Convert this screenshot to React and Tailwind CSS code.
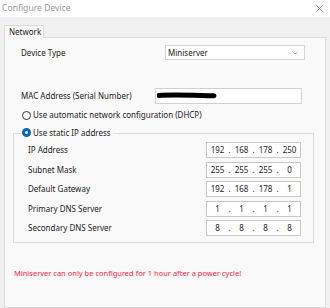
import React from "react";

function IpInput({ parts }) {
  return (
    <div className="w-[95px] h-[16px] bg-white border border-[#c8c8c8] flex items-center text-[8px] text-[#222]">
      {parts.map((p, i) => (
        <React.Fragment key={i}>
          <span className="flex-1 text-center">{p}</span>
          {i < 3 && <span className="w-[3px] text-center">.</span>}
        </React.Fragment>
      ))}
    </div>
  );
}

function Row({ label, parts }) {
  return (
    <div className="flex items-center justify-between h-[16px]">
      <span className="text-[8px] text-[#222]">{label}</span>
      <IpInput parts={parts} />
    </div>
  );
}

export default function App() {
  return (
    <div
      className="w-[330px] h-[308px] bg-[#f0f0f0] overflow-hidden flex flex-col"
      style={{ fontFamily: '"Noto Sans", "Open Sans", sans-serif' }}
    >
      <div className="h-[17px] bg-white flex items-center justify-between pl-[2px] pr-[7px] shrink-0">
        <span className="text-[8.6px] text-[#9a9a9a] leading-none">Configure Device</span>
        <svg width="7" height="7" viewBox="0 0 7 7">
          <path d="M0.5 0.5L6.5 6.5M6.5 0.5L0.5 6.5" stroke="#8a8a8a" strokeWidth="0.8" />
        </svg>
      </div>
      <div className="pl-[4px] pr-[4px] pt-[8px] flex flex-col flex-1">
        <div className="flex">
          <div className="h-[13px] w-[40px] bg-[#f9f9f9] border border-b-0 border-[#d9d9d9] flex items-center pl-[4px] text-[8px] text-[#222] leading-none -mb-px relative">
            Network
          </div>
        </div>
        <div className="flex-1 bg-[#f9f9f9] border border-[#dcdcdc] pl-[16px] pr-[23px] pt-[7px]">
          <div className="flex items-center justify-between h-[15px]">
            <span className="text-[8px] text-[#222]">Device Type</span>
            <div className="w-[140px] h-[15px] bg-white border border-[#d4d4d4] flex items-center justify-between pl-[2px] pr-[6px] mr-[-3px]">
              <span className="text-[8px] text-[#222]">Miniserver</span>
              <svg width="6" height="4" viewBox="0 0 6 4">
                <path d="M0.5 0.5L3 3L5.5 0.5" stroke="#9a9a9a" strokeWidth="0.8" fill="none" />
              </svg>
            </div>
          </div>
          <div className="flex items-center justify-between h-[16px] mt-[28px]">
            <span className="text-[8px] text-[#222]">MAC Address (Serial Number)</span>
            <div className="w-[147px] h-[16px] bg-white border border-[#d0d0d0] flex items-center pl-[1px]">
              <svg width="60" height="8" viewBox="0 0 60 8">
                <path d="M2 3.5 C 15 2.5, 40 3.5, 57 3.8" stroke="#000" strokeWidth="5" strokeLinecap="round" fill="none" />
              </svg>
            </div>
          </div>
          <div className="flex items-center h-[12px] mt-[5px] ml-[1px] gap-[2px]">
            <span className="w-[9px] h-[9px] rounded-full border border-[#333] bg-white" />
            <span className="text-[8px] text-[#222]">Use automatic network configuration (DHCP)</span>
          </div>
          <div className="relative mt-[12px] ml-[-8px] mr-[-12px] border border-[#dcdcdc] h-[110px] pt-[8px] pl-[14px] pr-[12px]">
            <div className="absolute left-[8px] top-[-6px] flex items-center gap-[2px] bg-[#f9f9f9] pr-[2px]">
              <span className="w-[9px] h-[9px] rounded-full border-[3px] border-[#0067c0] bg-white" />
              <span className="text-[8px] text-[#222] leading-none">Use static IP address</span>
            </div>
            <div className="flex flex-col gap-[3.5px]">
              <Row label="IP Address" parts={["192", "168", "178", "250"]} />
              <Row label="Subnet Mask" parts={["255", "255", "255", "0"]} />
              <Row label="Default Gateway" parts={["192", "168", "178", "1"]} />
              <Row label="Primary DNS Server" parts={["1", "1", "1", "1"]} />
              <Row label="Secondary DNS Server" parts={["8", "8", "8", "8"]} />
            </div>
          </div>
          <div className="mt-[25px] ml-[-7px] text-[7.5px] text-[#ff1e3c] whitespace-nowrap">
            Miniserver can only be configured for 1 hour after a power cycle!
          </div>
        </div>
      </div>
    </div>
  );
}
